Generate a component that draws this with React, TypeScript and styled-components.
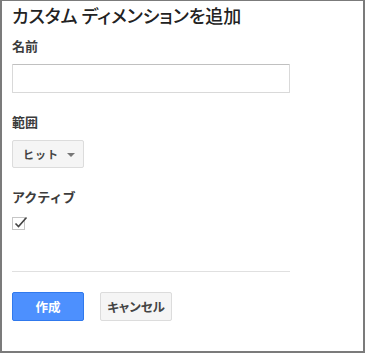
import React from "react";
import styled, { createGlobalStyle } from "styled-components";

const Global = createGlobalStyle`
  html, body { margin: 0; padding: 0; background: #fff; }
  body { font-family: Arial, "Liberation Sans", "Noto Sans CJK JP", sans-serif; }
  * { box-sizing: border-box; }
`;

const Frame = styled.div`
  width: 365px;
  height: 353px;
  border: 2px solid #7b7b7b;
  border-top-width: 1px;
  padding: 0 10px;
  display: flex;
  flex-direction: column;
  background: #fff;
`;

const Title = styled.h1`
  margin: 2px 0 0;
  font-size: 18px;
  line-height: 24px;
  font-weight: 500;
  color: #222;
  font-family: "Noto Sans CJK JP", sans-serif;
  font-feature-settings: "palt";
`;

const Label = styled.div<{ $top: number }>`
  margin-top: ${(p) => p.$top}px;
  font-size: 13px;
  line-height: 18px;
  font-weight: 700;
  color: #3c3c3c;
  font-family: "Noto Sans CJK JP", sans-serif;
`;

const TextInput = styled.input`
  margin-top: 9px;
  width: 278px;
  height: 29px;
  border: 1px solid #d9d9d9;
  border-top-color: #c0c0c0;
  border-radius: 1px;
  padding: 0 8px;
  font-size: 13px;
  outline: none;
`;

const Button = styled.button<{ $primary?: boolean }>`
  height: 29px;
  min-width: 72px;
  padding: 0 6px;
  border-radius: 2px;
  border: 1px solid ${(p) => (p.$primary ? "#3079ed" : "#dcdcdc")};
  background: ${(p) => (p.$primary ? "#4d90fe" : "#f5f5f5")};
  color: ${(p) => (p.$primary ? "#fff" : "#444")};
  font-family: "Noto Sans CJK JP", sans-serif;
  font-feature-settings: "palt";
  font-size: 12.5px;
  font-weight: 700;
  display: inline-flex;
  align-items: center;
  justify-content: center;
  cursor: pointer;
`;

const Select = styled(Button)`
  margin-top: 9px;
  width: 72px;
  height: 28px;
  justify-content: space-between;
  padding: 0 8px 0 10px;
  font-size: 11px;
  font-feature-settings: normal;
  letter-spacing: 1px;
`;

const Arrow = styled.span`
  width: 0;
  height: 0;
  border-left: 4px solid transparent;
  border-right: 4px solid transparent;
  border-top: 4px solid #777;
  margin-top: 2px;
`;

const Row = styled.div`
  display: flex;
`;

const Check = styled.div`
  margin-top: 11px;
  width: 13px;
  height: 13px;
  border: 1px solid #c6c6c6;
  position: relative;
`;

const CheckMark = styled.svg`
  position: absolute;
  left: 1px;
  top: -3px;
`;

const Divider = styled.hr`
  margin: 41px 0 0;
  width: 278px;
  border: none;
  border-top: 1px solid #e0e0e0;
`;

const Actions = styled.div`
  margin-top: 20px;
  display: flex;
  gap: 16px;
`;

export default function App() {
  return (
    <>
      <Global />
      <Frame>
        <Title>カスタム ディメンションを追加</Title>
        <Label $top={10}>名前</Label>
        <TextInput type="text" />
        <Label $top={20}>範囲</Label>
        <Row>
          <Select>
            <span>ヒット</span>
            <Arrow />
          </Select>
        </Row>
        <Label $top={20}>アクティブ</Label>
        <Row>
          <Check>
            <CheckMark width="14" height="14" viewBox="0 0 14 14">
              <path d="M1.5 8.5 L4.5 11.5 L12.5 2.5" fill="none" stroke="#444" strokeWidth="1.6" />
            </CheckMark>
          </Check>
        </Row>
        <Divider />
        <Actions>
          <Button $primary>作成</Button>
          <Button>キャンセル</Button>
        </Actions>
      </Frame>
    </>
  );
}
